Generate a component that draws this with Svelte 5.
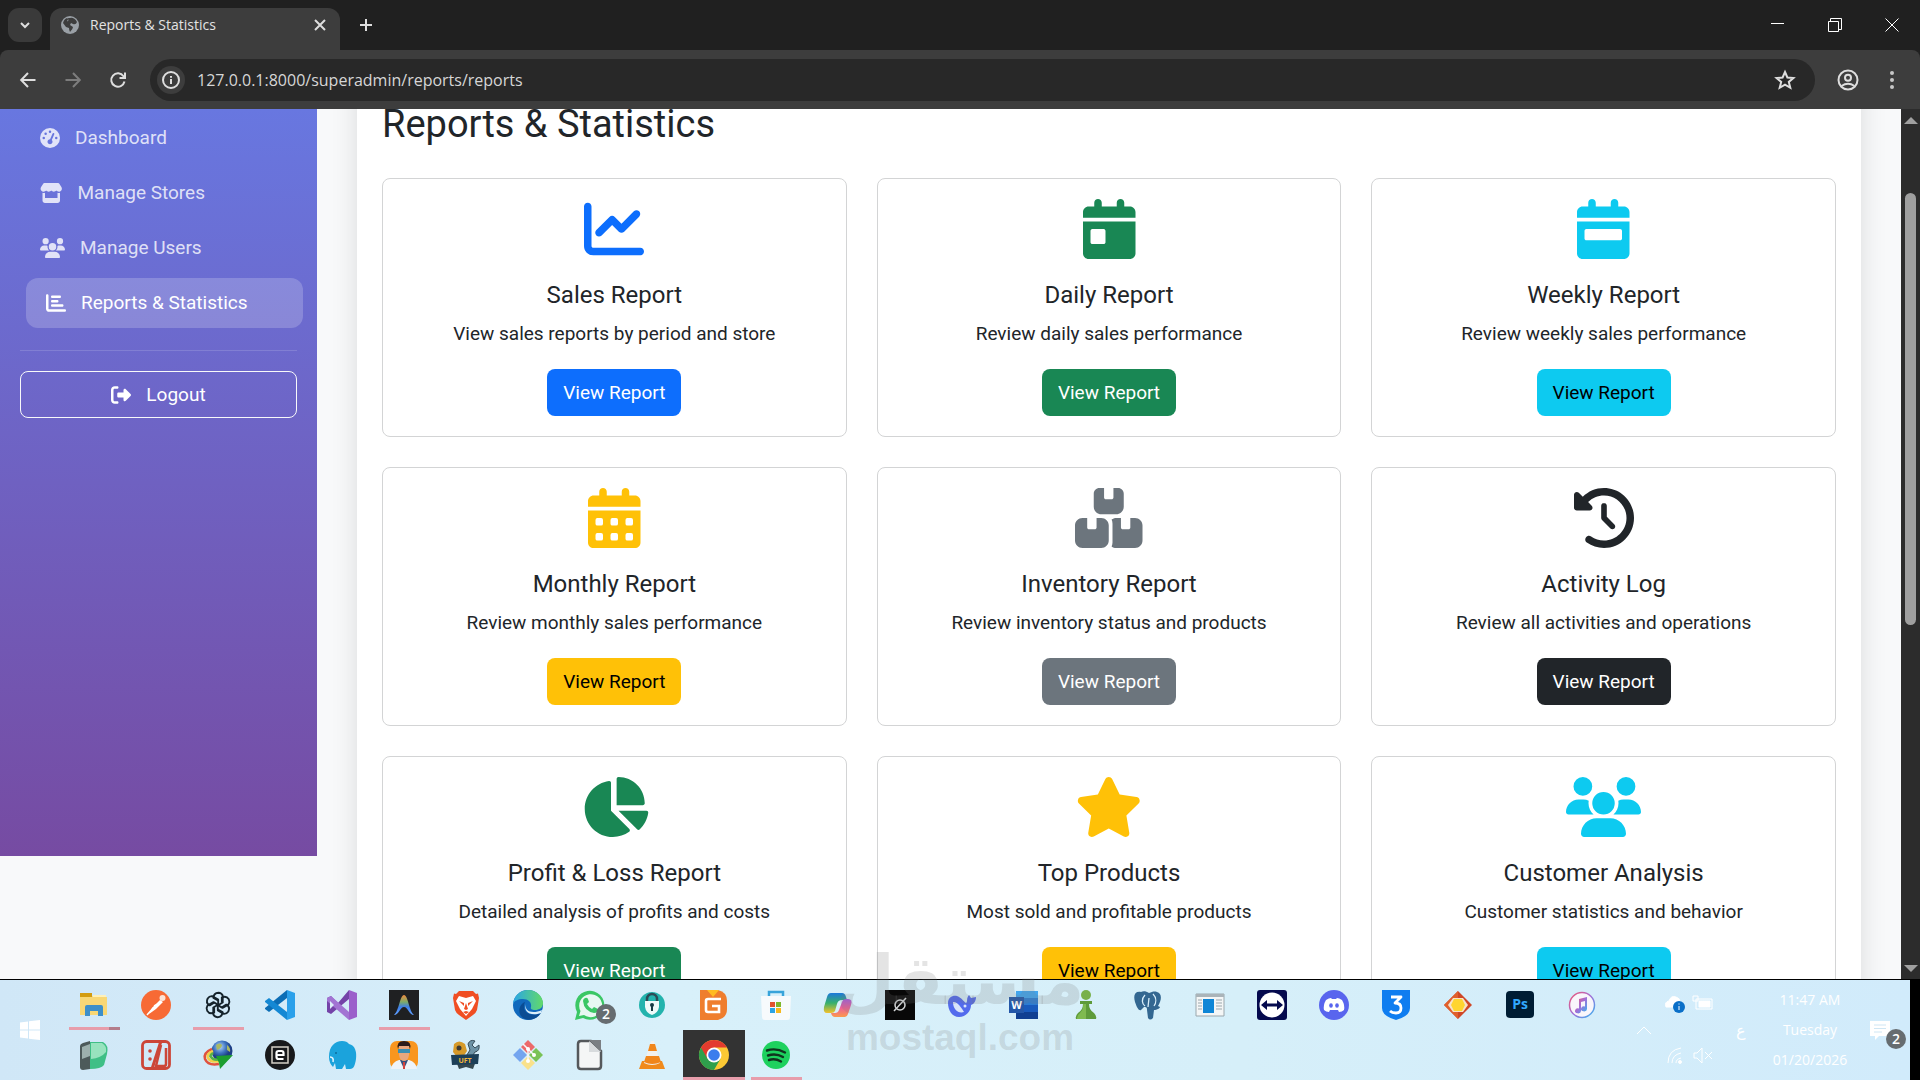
<script>
  const cal = 'M128 0c17.7 0 32 14.3 32 32V64H288V32c0-17.7 14.3-32 32-32s32 14.3 32 32V64h48c26.5 0 48 21.5 48 48v48H0V112C0 85.5 21.5 64 48 64H96V32c0-17.7 14.3-32 32-32zM0 192H448V464c0 26.5-21.5 48-48 48H48c-26.5 0-48-21.5-48-48V192z';
  const dot = (x, y) => `M${x + 16} ${y}h32a16 16 0 0 1 16 16v32a16 16 0 0 1-16 16h-32a16 16 0 0 1-16-16v-32a16 16 0 0 1 16-16z`;

  // w is the glyph width on a 512 high box
  const icons = {
    gauge: { w: 512, d: 'M0 256a256 256 0 1 1 512 0A256 256 0 1 1 0 256zM288 96a32 32 0 1 0 -64 0 32 32 0 1 0 64 0zM256 416c35.3 0 64-28.7 64-64c0-17.4-6.9-33.1-18.1-44.6L366 161.7c5.3-12.1-.2-26.3-12.3-31.6s-26.3 .2-31.6 12.3L257.9 288c-.6 0-1.3 0-1.9 0c-35.3 0-64 28.7-64 64s28.7 64 64 64zM176 144a32 32 0 1 0 -64 0 32 32 0 1 0 64 0zM96 288a32 32 0 1 0 0-64 32 32 0 1 0 0 64zm352-32a32 32 0 1 0 -64 0 32 32 0 1 0 64 0z' },
    store: { w: 576, d: 'M547.6 103.8L490.3 13.1C485.2 5 476.1 0 466.4 0H109.6C99.9 0 90.8 5 85.7 13.1L28.3 103.8c-29.6 46.8-3.4 111.9 51.9 119.4c4 .5 8.1 .8 12.1 .8c26.1 0 49.3-11.4 65.2-29c15.9 17.6 39.1 29 65.2 29c26.1 0 49.3-11.4 65.2-29c15.9 17.6 39.1 29 65.2 29c26.2 0 49.3-11.4 65.2-29c16 17.6 39.1 29 65.2 29c4.1 0 8.1-.3 12.1-.8c55.5-7.4 81.8-72.5 52.1-119.4zM499.7 254.9l-.1 0c-5.3 .7-10.7 1.1-16.2 1.1c-12.4 0-24.3-1.9-35.4-5.3V384H128V250.6c-11.2 3.5-23.2 5.4-35.6 5.4c-5.5 0-11-.4-16.3-1.1l-.1 0c-4.1-.6-8.1-1.3-12-2.3V384v64c0 35.3 28.7 64 64 64H448c35.3 0 64-28.7 64-64V384 252.6c-4 1-8 1.8-12.3 2.3z' },
    users: { w: 640, d: 'M144 0a80 80 0 1 1 0 160A80 80 0 1 1 144 0zM512 0a80 80 0 1 1 0 160A80 80 0 1 1 512 0zM0 298.7C0 239.8 47.8 192 106.7 192h42.7c15.9 0 31 3.5 44.6 9.7c-1.3 7.2-1.9 14.7-1.9 22.3c0 38.2 16.8 72.5 43.3 96c-.2 0-.4 0-.7 0H21.3C9.6 320 0 310.4 0 298.7zM405.3 320c-.2 0-.4 0-.7 0c26.6-23.5 43.3-57.8 43.3-96c0-7.6-.7-15-1.9-22.3c13.6-6.3 28.7-9.7 44.6-9.7h42.7C592.2 192 640 239.8 640 298.7c0 11.8-9.6 21.3-21.3 21.3H405.3zM224 224a96 96 0 1 1 192 0 96 96 0 1 1 -192 0zM128 485.3C128 411.7 187.7 352 261.3 352H378.7C452.3 352 512 411.7 512 485.3c0 14.7-11.9 26.7-26.7 26.7H154.7c-14.7 0-26.7-11.9-26.7-26.7z' },
    bars: { w: 512, d: 'M32 32c17.7 0 32 14.3 32 32V400c0 8.800 7.200 16 16 16H480c17.7 0 32 14.3 32 32s-14.3 32-32 32H80c-44.2 0-80-35.8-80-80V64C0 46.3 14.3 32 32 32zM128 96c0-17.7 14.3-32 32-32l192 0c17.7 0 32 14.3 32 32s-14.3 32-32 32l-192 0c-17.7 0-32-14.3-32-32zm32 80H288c17.7 0 32 14.3 32 32s-14.3 32-32 32H160c-17.7 0-32-14.3-32-32s14.3-32 32-32zm0 112H416c17.7 0 32 14.3 32 32s-14.3 32-32 32H160c-17.7 0-32-14.3-32-32s14.3-32 32-32z' },
    logout: { w: 512, d: 'M377.9 105.9L500.7 228.7c7.2 7.2 11.3 17.1 11.3 27.3s-4.1 20.1-11.3 27.3L377.9 406.1c-6.4 6.4-15 9.9-24 9.9c-18.7 0-33.9-15.2-33.9-33.9l0-62.1-128 0c-17.7 0-32-14.3-32-32l0-64c0-17.7 14.3-32 32-32l128 0 0-62.1c0-18.7 15.2-33.9 33.9-33.9c9 0 17.6 3.6 24 9.9zM160 96L96 96c-17.7 0-32 14.3-32 32l0 256c0 17.7 14.3 32 32 32l64 0c17.7 0 32 14.3 32 32s-14.3 32-32 32l-64 0c-53 0-96-43-96-96L0 128C0 75 43 32 96 32l64 0c17.7 0 32 14.3 32 32s-14.3 32-32 32z' },
    line: { w: 512, d: 'M64 64c0-17.7-14.3-32-32-32S0 46.3 0 64V400c0 44.2 35.8 80 80 80H480c17.7 0 32-14.3 32-32s-14.3-32-32-32H80c-8.8 0-16-7.2-16-16V64zm406.6 86.6c12.5-12.5 12.5-32.8 0-45.3s-32.8-12.5-45.3 0L320 210.7l-57.4-57.4c-12.5-12.5-32.8-12.5-45.3 0l-112 112c-12.5 12.5-12.5 32.8 0 45.3s32.8 12.5 45.3 0L240 221.3l57.4 57.4c12.5 12.5 32.8 12.5 45.3 0l128-128z' },
    day: { w: 448, d: cal + 'm80 64c-8.8 0-16 7.2-16 16v96c0 8.8 7.2 16 16 16h96c8.8 0 16-7.2 16-16V272c0-8.8-7.2-16-16-16H80z' },
    week: { w: 448, d: cal + 'm80 64c-8.8 0-16 7.2-16 16v64c0 8.8 7.2 16 16 16H368c8.8 0 16-7.2 16-16V272c0-8.8-7.2-16-16-16H80z' },
    month: { w: 448, d: cal + [64, 192, 320].map((x) => dot(x, 256) + dot(x, 384)).join('') },
    boxes: { w: 576, d: 'M248 0H208c-26.5 0-48 21.5-48 48V160c0 35.3 28.7 64 64 64H352c35.3 0 64-28.7 64-64V48c0-26.5-21.5-48-48-48H328V80c0 8.8-7.2 16-16 16H264c-8.8 0-16-7.2-16-16V0zM64 256c-35.3 0-64 28.7-64 64V448c0 35.3 28.7 64 64 64H224c35.3 0 64-28.7 64-64V320c0-35.3-28.7-64-64-64H184v80c0 8.8-7.2 16-16 16H120c-8.8 0-16-7.2-16-16V256H64zM352 512H512c35.3 0 64-28.7 64-64V320c0-35.3-28.7-64-64-64H472v80c0 8.8-7.2 16-16 16H408c-8.8 0-16-7.2-16-16V256H352c-15 0-28.8 5.1-39.7 13.8c4.9 10.4 7.7 22 7.7 34.2V464c0 12.2-2.8 23.8-7.7 34.2C323.2 506.9 337 512 352 512z' },
    history: { w: 512, d: 'M75 75L41 41C25.9 25.9 0 36.6 0 57.9V168c0 13.3 10.7 24 24 24H134.1c21.4 0 32.1-25.9 17-41l-30.8-30.8C155 85.5 203 64 256 64c106 0 192 86 192 192s-86 192-192 192c-40.8 0-78.6-12.7-109.7-34.4c-14.5-10.1-34.4-6.6-44.6 7.9s-6.6 34.4 7.9 44.6C151.2 495 201.7 512 256 512c141.4 0 256-114.6 256-256S397.4 0 256 0C185.3 0 121.3 28.7 75 75zm181 53c-13.3 0-24 10.7-24 24V256c0 6.4 2.5 12.5 7 17l72 72c9.4 9.4 24.6 9.4 33.9 0s9.4-24.6 0-33.9l-65-65V152c0-13.3-10.7-24-24-24z' },
    pie: { w: 576, d: 'M304 240V16.6c0-9 7-16.6 16-16.6C443.7 0 544 100.3 544 224c0 9-7.6 16-16.6 16H304zM32 272C32 150.7 122.1 50.3 239 34.3c9.2-1.3 17 6.1 17 15.4V288L412.5 444.5c6.7 6.7 6.2 17.7-1.5 23.1C371.8 495.6 323.8 512 272 512C139.5 512 32 404.6 32 272zm526.4 16c9.3 0 16.6 7.8 15.4 17c-7.7 55.9-34.6 105.6-73.9 142.3c-6 5.6-15.4 5.2-21.2-.7L320 288H558.4z' },
    star: { w: 576, d: 'M316.9 18C311.6 7 300.4 0 288.1 0s-23.4 7-28.8 18L195 150.3 51.4 171.5c-12 1.8-22 10.2-25.7 21.7s-.7 24.2 7.9 32.7L137.8 329 113.2 474.7c-2 12 3 24.2 12.9 31.3s23 8 33.8 2.3l128.3-68.5 128.3 68.5c10.8 5.7 23.9 4.9 33.8-2.3s14.9-19.3 12.9-31.3L438.5 329 542.7 225.9c8.6-8.5 11.7-21.2 7.9-32.7s-13.7-19.9-25.7-21.7L381.2 150.3 316.9 18z' },
  };

  const nav = [
    { label: 'Dashboard', icon: 'gauge' },
    { label: 'Manage Stores', icon: 'store' },
    { label: 'Manage Users', icon: 'users' },
    { label: 'Reports & Statistics', icon: 'bars', active: true },
  ];

  const reports = [
    { title: 'Sales Report', text: 'View sales reports by period and store', icon: 'line', tone: 'primary' },
    { title: 'Daily Report', text: 'Review daily sales performance', icon: 'day', tone: 'success' },
    { title: 'Weekly Report', text: 'Review weekly sales performance', icon: 'week', tone: 'info' },
    { title: 'Monthly Report', text: 'Review monthly sales performance', icon: 'month', tone: 'warning' },
    { title: 'Inventory Report', text: 'Review inventory status and products', icon: 'boxes', tone: 'secondary' },
    { title: 'Activity Log', text: 'Review all activities and operations', icon: 'history', tone: 'dark' },
    { title: 'Profit & Loss Report', text: 'Detailed analysis of profits and costs', icon: 'pie', tone: 'success' },
    { title: 'Top Products', text: 'Most sold and profitable products', icon: 'star', tone: 'warning' },
    { title: 'Customer Analysis', text: 'Customer statistics and behavior', icon: 'users', tone: 'info' },
  ];

  const petals = (shape) => [0, 60, 120, 180, 240, 300].map((a) => `<g transform="rotate(${a} 15 15)">${shape}</g>`).join('');

  // taskbar artwork, each on a 30x30 box
  const row1 = [
    { name: 'File Explorer', open: true, stacked: true, art: '<path d="M1 4h11l2 3h14v18H1z" fill="#f8d775"/><path d="M1 3h12v4H1z" fill="#d39c10"/><path d="M14 5h13v2H14z" fill="#fff0b8"/><path d="M6 26V17q0-2 2-2h14q2 0 2 2v9h-5v-5h-8v5z" fill="#3d8fc9"/>' },
    { name: 'Postman', art: '<circle cx="15" cy="15" r="15" fill="#f76a35"/><circle cx="21.500" cy="8" r="3" fill="#fde3d6"/><path d="M19 10l3 2-7 7-7 5 3-6z" fill="#fff"/><path d="M6 25l7-8M13 16l4-2" stroke="#fff" stroke-width="1.500"/>' },
    { name: 'ChatGPT', open: true, art: '<g fill="none" stroke="#15232b" stroke-width="1.900" stroke-linejoin="round">' + petals('<path d="M15 10.500L10.500 8q0-5 5-5.200 3 .2 4.200 2.700V12.500L15 15.200"/>') + '</g>' },
    { name: 'Visual Studio Code', art: '<path d="M22 0l8 3v24l-8 3z" fill="#2aa0ea"/><path d="M22 0v8L4 22l-4-3v-1z" fill="#0b6db5"/><path d="M22 30v-8L4 8l-4 3v1z" fill="#1488d4"/>' },
    { name: 'Visual Studio', art: '<path d="M22 0l8 3v24l-8 3z" fill="#9b5fcb"/><path d="M0 8l4-2 7 7L22 0v9L4 24l-4-2z" fill="#7443a8"/><path d="M4 6l18 16v8L0 11V8z" fill="#a274d3"/><path d="M3 11l4 4-4 4z" fill="#dceefa"/>' },
    { name: 'Antigravity', open: true, art: '<defs><linearGradient id="ag" x1="0" x2="0" y1="0" y2="1"><stop offset="0" stop-color="#f08a3c"/><stop offset=".35" stop-color="#7dab68"/><stop offset=".6" stop-color="#3d7fe8"/><stop offset="1" stop-color="#62a0ff"/></linearGradient></defs><path d="M0 0h30v30H0z" fill="#1f2022"/><path d="M5 25C10 21 11 5 15 5s5 16 10 20c-5 0-6-8-10-8s-5 8-10 8z" fill="url(#ag)"/>' },
    { name: 'Brave', art: '<path d="M8 1h14l3 3 2-.500L28 8l-2 12q-1 3-4 5l-7 5-7-5q-3-2-4-5L2 8l1-4.500 2 .500z" fill="#f04e23"/><path d="M8 6l7 2 7-2 3 5-4 8-6 7-6-7-4-8z" fill="#fff"/><path d="M8 11l5 2v3zM22 11l-5 2v3zM15 13l-2 6 2 1 2-1zM12 22l3-1 3 1-3 2z" fill="#f04e23"/>' },
    { name: 'Edge', art: '<defs><linearGradient id="ed" x1="0" x2="1"><stop offset="0" stop-color="#2aa5e6"/><stop offset="1" stop-color="#62da69"/></linearGradient></defs><circle cx="15" cy="15" r="15" fill="#1169bd"/><path d="M0 14C1 5 8 0 15 0c9 0 15 7 15 13 0 5-4 7-8 7-3 0-5-1-4-3 1-5-3-8-8-8S1 11 0 14z" fill="url(#ed)"/><path d="M12 12c-4 8 3 16 16 11-4 6-11 8-16 6C3 25 6 14 12 12z" fill="#0a4c93"/><path d="M13 14c-2 6 5 11 16 6l-1 3c-11 4-18-2-15-9z" fill="#dceffa"/>' },
    { name: 'WhatsApp', badge: '2', art: '<path d="M0 30l2-8A14.500 14.500 0 1 1 8 28z" fill="#3bc765"/><path d="M4 26l1.500-5A11.500 11.500 0 1 1 9 25z" fill="#e8f8f2"/><path d="M10 8q2-1 3 1l1 3-2 2q2 4 5 5l2-2 4 2q0 4-4 4Q9 21 8 11q0-2 2-3z" fill="#3bc765"/>' },
    { name: 'Password Manager', art: '<circle cx="15" cy="15" r="13" fill="#23b3ad"/><path d="M10 12V9a5 5 0 0 1 10 0v3" fill="none" stroke="#2c4b56" stroke-width="2.500"/><path d="M8 11h14v6q-1 6-7 8-6-2-7-8z" fill="#eefaf9"/><circle cx="15" cy="15" r="2" fill="#173a44"/><path d="M14 15h2v6h-2z" fill="#173a44"/>' },
    { name: 'GameLoop', art: '<path d="M1 0h18q9 2 9 11v8q0 9-9 11H1z" fill="#ef7e2e"/><path d="M8 0h12l-6 7z" fill="#ffbb22"/><path d="M22 9H9q-2 0-2 2v9q0 2 2 2h11v-6h-7" fill="none" stroke="#fff" stroke-width="2.600"/>' },
    { name: 'Microsoft Store', art: '<path d="M8 7V2h14v5" fill="none" stroke="#37a3da" stroke-width="2.500"/><path d="M0 6h30l-1 21q0 3-3 3H4q-3 0-3-3z" fill="#f7fafc"/><path d="M9 12h5v5H9z" fill="#e0532f"/><path d="M15 12h5v5h-5z" fill="#7eb72b"/><path d="M9 18h5v5H9z" fill="#29a4e6"/><path d="M15 18h5v5h-5z" fill="#f6b81e"/>' },
    { name: 'Copilot', art: '<defs><linearGradient id="cp" x1="0" x2="0" y1="0" y2="1"><stop offset="0" stop-color="#1c78dc"/><stop offset=".5" stop-color="#37b06c"/><stop offset="1" stop-color="#f5c22a"/></linearGradient><linearGradient id="cq" x1="0" x2="0" y1="0" y2="1"><stop offset="0" stop-color="#a85be0"/><stop offset=".5" stop-color="#ee6197"/><stop offset="1" stop-color="#fb9a4b"/></linearGradient></defs><path d="M8 3h11q3 0 4 4l1 3h-5q-4 0-5 4l-2 7q-1 2-4 2H4q-4 0-3-6l3-10q1-4 4-4z" fill="url(#cp)"/><path d="M22 27H12q-3 0-4-4h4q3 0 4-3l3-8q1-3 4-3h2q5 0 3 6l-3 9q-1 3-3 3z" fill="url(#cq)"/>' },
    { name: 'Grok', art: '<path d="M0 0h30v30H0z" fill="#080808"/><circle cx="15" cy="15" r="5" fill="none" stroke="#d2d5d6" stroke-width="1.500"/><path d="M9 21L21 8" stroke="#d2d5d6" stroke-width="1.500"/>' },
    { name: 'DeepSeek', art: '<path d="M1 13c0-6 5-8 9-7 5 2 6 5 9 7 2-1 0-5 3-8l2 3 5-1c0 4-2 7-5 8 0 6-5 12-12 12S1 20 1 13z" fill="#536bed"/><path d="M6 12c4-1 8 5 11 10-6 2-11-3-11-10z" fill="#d9e4fa"/><circle cx="18" cy="16" r="1.500" fill="#d9e4fa"/>' },
    { name: 'Word', art: '<path d="M7 1h22v9H7z" fill="#41a5ee"/><path d="M7 8h22v7H7z" fill="#2b7cd3"/><path d="M7 15h22v7H7z" fill="#185abd"/><path d="M7 22h22v7H7z" fill="#103f91"/><path d="M0 7h15v16H0z" fill="#2457a8"/><text x="7.500" y="19" font-size="11" font-weight="700" text-anchor="middle" fill="#fff" font-family="Open Sans, sans-serif">W</text>' },
    { name: 'Chess', art: '<circle cx="15" cy="5" r="5" fill="#78b04a"/><path d="M9 11h12v3h-3q0 6 5 9 3 3 2 6H5q-1-3 2-6 5-3 5-9H9z" fill="#5e9b3a"/><path d="M12 14h3v15H6q0-4 3-6 4-4 3-9z" fill="#7fba4f"/>' },
    { name: 'PostgreSQL', art: '<path d="M8 2C2 1 0 5 2 12c2 6 4 9 6 8l3-3c2 0 3 0 3 3l1 8q2 3 5 0l1-8c3 0 6-2 6-3l-2-1c4-6 4-13-1-14-3-1-5 0-8 1-3-2-6-2-8-1z" fill="#336791"/><path d="M12 5C8 9 9 14 12 16M20 4c4 4 3 9 1 12M16 8l-1 9" fill="none" stroke="#d9eefa" stroke-width="1.300"/>' },
    { name: 'Window', art: '<path d="M1 4h28v22H1z" fill="#f4f6f6" stroke="#9aa7ad"/><path d="M1 4h28v3H1z" fill="#aab4b9"/><path d="M8 9h11v14H8z" fill="#0f86d6"/><path d="M3 10h4M3 13h4M3 16h4M3 19h4M21 10h6M21 13h6M21 16h6M21 19h6" stroke="#9aa7ad"/>' },
    { name: 'TeamViewer', art: '<rect width="30" height="30" rx="3" fill="#050a4e"/><circle cx="15" cy="15" r="12.500" fill="#fff"/><path d="M4 15l6-5v3.500h10V10l6 5-6 5v-3.500H10V20z" fill="#050a4e"/>' },
    { name: 'Discord', art: '<circle cx="15" cy="15" r="15" fill="#5965ee"/><path d="M7 10q3-2 5-2l1 1h4l1-1q2 0 5 2 3 5 2 10-2 2-5 2l-1-2h-8l-1 2q-3 0-5-2-1-5 2-10z" fill="#fff"/><ellipse cx="12" cy="15.500" rx="1.800" ry="2.200" fill="#5965ee"/><ellipse cx="18" cy="15.500" rx="1.800" ry="2.200" fill="#5965ee"/>' },
    { name: '3D Viewer', art: '<path d="M1 0h28v18q0 8-14 12Q1 26 1 18z" fill="#0f7df0"/><path d="M10 7h10l-6 6q6 0 6 5t-5 5q-4 0-6-2" fill="none" stroke="#fff" stroke-width="2.800" stroke-linejoin="round"/>' },
    { name: 'Diamond', art: '<path d="M15 1l14 14-14 14L1 15z" fill="#cf4726"/><path d="M15 1v28L1 15z" fill="#e0602c"/><path d="M10 8h10l5 7-5 7H10l-5-7z" fill="#f7e2c8"/><path d="M11 9h8l3 6-3 6h-8l-3-6z" fill="#ffd52f"/>' },
    { name: 'Photoshop', art: '<rect x="1" y="1" width="28" height="27" rx="4" fill="#001d34"/><text x="15" y="19" font-size="14" font-weight="700" text-anchor="middle" fill="#31a8ff" font-family="Open Sans, sans-serif">Ps</text>' },
    { name: 'iTunes', art: '<defs><linearGradient id="it" x1="0" x2="1" y1="0" y2="1"><stop offset="0" stop-color="#f4556f"/><stop offset=".5" stop-color="#a06fd8"/><stop offset="1" stop-color="#36b6f0"/></linearGradient></defs><circle cx="15" cy="15" r="12.500" fill="#f9f6fb" stroke="url(#it)" stroke-width="1.500"/><path d="M12 9l8-2v12a3 2.500 0 1 1-2-2.500V11l-4 1v9a3 2.500 0 1 1-2-2.500z" fill="url(#it)"/>' },
  ];

  const row2 = [
    { name: 'Emulator', art: '<path d="M1 6q0-2 3-3l7-2v28l-7 1q-3 0-3-3z" fill="#4d5a5a"/><path d="M3 7l8-3v12l-8 3z" fill="#9db0ad"/><path d="M11 2l13 0q6 3 4 12l-3 11q-3 4-14 4z" fill="#3fbf86"/><path d="M12 3l11 0q5 3 4 9-5 6-15 7z" fill="#97e3be"/>' },
    { name: 'Download Manager', art: '<rect x="1.500" y="1.500" width="27" height="27" rx="4" fill="none" stroke="#cc4638" stroke-width="2.800"/><path d="M20 1l-9 28" stroke="#cc4638" stroke-width="3"/><path d="M20 5L15 26h8q2 0 2-2V8" fill="none" stroke="#cc4638" stroke-width="2.500"/><circle cx="9" cy="11" r="1.800" fill="#cc4638"/><circle cx="9" cy="19" r="1.800" fill="#cc4638"/>' },
    { name: 'Internet Download Manager', art: '<defs><radialGradient id="gl" cx=".4" cy=".3"><stop offset="0" stop-color="#b8d8f8"/><stop offset=".6" stop-color="#3e74c0"/><stop offset="1" stop-color="#1d3f86"/></radialGradient></defs><circle cx="19" cy="11" r="10.500" fill="url(#gl)"/><path d="M13 5q4-3 6 0 0 3-5 5zM24 5q4 3 3 7l-3-2z" fill="#a9b964"/><path d="M9 9Q0 13 2 19q3 7 14 5" fill="none" stroke="#e0523e" stroke-width="2.500"/><path d="M10 11q-7 3-5 7 3 5 12 3" fill="none" stroke="#f2d148" stroke-width="2.500"/><path d="M10 13q-4 3-2 4 3 4 9 2" fill="none" stroke="#58b347" stroke-width="2.500"/><path d="M13 16l17-1-13 14-1-6z" fill="#1c9e30"/>' },
    { name: 'Epic', art: '<circle cx="15" cy="15" r="15" fill="#18191b"/><path d="M7 7h16v16H7z" fill="none" stroke="#d4cfc6" stroke-width="1.500"/><path d="M18.500 19h-5q-2 0-2-2v-4q0-2 2-2h3q2 0 2 2v2h-6" fill="none" stroke="#fff" stroke-width="2.200"/>' },
    { name: 'Herd', art: '<path d="M2 17C2 6 8 1 15 1q5 0 7 3c6 1 8 8 7 15-1 6-2 10-6 10h-4l-1-5-3 5H9l-1-6-2 4q-4-4-4-10z" fill="#1ba3dc"/><path d="M3 17q4 0 3 5" stroke="#e8f7ff" stroke-width="1.500" fill="none"/><circle cx="9" cy="13" r="1" fill="#0d6e9c"/>' },
    { name: 'Doctor', art: '<rect x="1" y="1" width="28" height="28" rx="7" fill="#f9961e"/><path d="M2 29q1-7 8-9h10q7 2 8 9z" fill="#eef3f8"/><path d="M11 20h8l-4 9z" fill="#34507f"/><path d="M14 22h2v7h-2z" fill="#d2433f"/><path d="M10 6h10v9q-1 6-5 6t-5-6z" fill="#e8a77e"/><path d="M9 9Q7 1 15 1t6 8l-1-3H10z" fill="#2b1c1a"/><path d="M9 9h12v4H9z" fill="#3a8fb3"/>' },
    { name: 'UFT Tool', art: '<path d="M3 4q5-5 11 0l2 7-4 6H6l-4-5z" fill="#d69a2a"/><circle cx="8" cy="8" r="2.500" fill="#3c3a34"/><path d="M17 4q2-5 7-3l-3 4 3 3 4-3q1 6-4 7l-6 9-4-3 5-8z" fill="#6e93a6" stroke="#364b57"/><path d="M5 21h20l-3 8-7-2-7 2z" fill="#35474f"/><path d="M0 15l28-1-1 10-26 1z" fill="#1c3f58"/><text x="14" y="23" font-size="7" font-weight="700" text-anchor="middle" fill="#f2b53a" font-family="Open Sans, sans-serif">UFT</text>' },
    { name: 'Git', art: '<path d="M15 0l7 7-7 7-7-7z" fill="#ec6a6a"/><path d="M7 8l7 7-7 7-7-7z" fill="#74a5ef"/><path d="M23 8l7 7-7 7-7-7z" fill="#79c257"/><path d="M15 16l7 7-7 7-7-7z" fill="#f9e18b"/><path d="M10 4l11 11M15 8v13" stroke="#f7f9fa" stroke-width="1.500"/><circle cx="15" cy="9" r="2" fill="#fff"/><circle cx="21" cy="15" r="2" fill="#fff"/><circle cx="15" cy="21" r="2" fill="#fff"/>' },
    { name: 'LibreOffice', art: '<path d="M6 1h10l10 10v15q0 3-3 3H6q-3 0-3-3V4q0-3 3-3z" fill="#f5f6f6" stroke="#55585b" stroke-width="2.500"/><path d="M14 0h12v12z" fill="#7b7f83"/><path d="M14 1v11h12z" fill="#d8dbdd"/>' },
    { name: 'VLC', art: '<path d="M5 21h20l3 8H2z" fill="#f08a1c"/><path d="M14 1h3l6 22q-8 4-16 0z" fill="#f2f0ec"/><path d="M13 4h5l2 7h-9z" fill="#f0861b"/><path d="M9 16h13l2 6q-9 4-17 0z" fill="#f0861b"/>' },
    { name: 'Chrome', current: true, open: true, art: '<circle cx="15" cy="15" r="15" fill="#fcc934"/><path d="M2 7.500A15 15 0 0 0 15 30l6.500-11.300L15 15z" fill="#2fa04c"/><path d="M15 7.500H28A15 15 0 0 0 2 7.500l6.500 11.200z" fill="#e33b2e"/><circle cx="15" cy="15" r="7.500" fill="#fff"/><circle cx="15" cy="15" r="5.800" fill="#3b7ded"/>' },
    { name: 'Spotify', open: true, art: '<circle cx="15" cy="15" r="14" fill="#1ed15e"/><path d="M6 10.500q9-3 18 2M7 15.500q8-2.500 15 1.500M8 20q6-2 12 1.500" fill="none" stroke="#10341e" stroke-width="2.400" stroke-linecap="round"/>' },
  ];
</script>

{#snippet glyph(name, size)}
  <svg class="glyph" viewBox="0 0 {icons[name].w} 512" height={size} width={(icons[name].w * size) / 512} aria-hidden="true">
    <path d={icons[name].d} fill="currentColor" fill-rule="evenodd" />
  </svg>
{/snippet}

{#snippet task(app)}
  <button class="task" class:open={app.open} class:stacked={app.stacked} class:current={app.current} aria-label={app.name}>
    <svg viewBox="0 0 30 30" width="30" height="30">{@html app.art}</svg>
    {#if app.badge}<span class="badge">{app.badge}</span>{/if}
  </button>
{/snippet}

<div class="screen">
  <header class="tabs">
    <button class="tab-search" aria-label="Search tabs">
      <svg width="12" height="8" viewBox="0 0 12 8"><path d="M2 2l4 4 4-4" /></svg>
    </button>
    <div class="tab">
      <svg width="18" height="18" viewBox="0 0 18 18">
        <circle cx="9" cy="9" r="9" fill="#9aa0a6" />
        <path d="M9 2q4-1 7 4-1 3-4 2l-2-1-1 2 3 2q0 2-3 5-1-2-1-4l-3-1-3-4q1-4 4-5 2 1 0 3 2 1 1-3z" fill="#3d3d3d" />
      </svg>
      <span class="tab-title">Reports &amp; Statistics</span>
      <button aria-label="Close tab">
        <svg width="12" height="12" viewBox="0 0 12 12"><path d="M1 1l10 10M11 1L1 11" /></svg>
      </button>
    </div>
    <button class="new-tab" aria-label="New tab">
      <svg width="14" height="14" viewBox="0 0 14 14"><path d="M7 1v12M1 7h12" /></svg>
    </button>
    <div class="window-controls">
      <button aria-label="Minimize"><svg width="14" height="14" viewBox="0 0 14 14"><path d="M0 5.500h13" /></svg></button>
      <button aria-label="Restore"><svg width="14" height="14" viewBox="0 0 14 14"><path d="M.5 3.500h10v10H.5zM2.500 3V.5h11v11H11" /></svg></button>
      <button aria-label="Close"><svg width="14" height="14" viewBox="0 0 14 14"><path d="M.5 .5l13 13M13.500 .5l-13 13" /></svg></button>
    </div>
  </header>

  <div class="toolbar">
    <button aria-label="Back"><svg width="16" height="16" viewBox="0 0 16 16"><path d="M15.500 8H1.500M8 1L1.200 8 8 15" /></svg></button>
    <button class="off" aria-label="Forward"><svg width="16" height="16" viewBox="0 0 16 16"><path d="M.5 8h14M8 1l6.800 7L8 15" /></svg></button>
    <button aria-label="Reload"><svg width="16" height="16" viewBox="0 0 16 16"><path d="M14.500 9.500A6.700 6.700 0 1 1 13.500 4.200L15 6M15 .5V6H9.500" /></svg></button>
    <div class="address">
      <span class="site-info">
        <svg width="18" height="18" viewBox="0 0 18 18"><circle cx="9" cy="9" r="8" /><path d="M9 8v5M9 5v1.800" /></svg>
      </span>
      <input type="text" aria-label="Address" value="127.0.0.1:8000/superadmin/reports/reports" />
      <svg width="20" height="20" viewBox="0 0 20 20"><path d="M10 2l2.400 5.500 6 .5-4.600 3.900 1.500 5.900L10 14.700l-5.300 3.100 1.500-5.900L1.600 8l6-.5z" /></svg>
    </div>
    <button aria-label="Profile">
      <svg width="22" height="22" viewBox="0 0 22 22"><circle cx="11" cy="11" r="9.500" /><circle cx="11" cy="8.800" r="3" /><path d="M4.500 17q6.500-4.500 13 0" /></svg>
    </button>
    <button class="menu" aria-label="Menu">
      <svg width="4" height="18" viewBox="0 0 4 18"><circle cx="2" cy="2" r="2" /><circle cx="2" cy="9" r="2" /><circle cx="2" cy="16" r="2" /></svg>
    </button>
  </div>

  <div class="page">
    <aside>
      <nav>
        {#each nav as item}
          <a href="#{item.icon}" class:active={item.active}>{@render glyph(item.icon, 20)}{item.label}</a>
        {/each}
      </nav>
      <hr />
      <button class="logout">{@render glyph('logout', 20)}Logout</button>
    </aside>

    <main>
      <div class="panel">
        <h1>Reports &amp; Statistics</h1>
        <div class="cards">
          {#each reports as report}
            <section class="card {report.tone}">
              {@render glyph(report.icon, 60)}
              <h2>{report.title}</h2>
              <p>{report.text}</p>
              <a class="btn" href="#{report.icon}">View Report</a>
            </section>
          {/each}
        </div>
      </div>
    </main>

    <div class="scrollbar">
      <svg width="14" height="7" viewBox="0 0 14 7"><path d="M7 0l7 7H0z" /></svg>
      <div class="track"><div class="thumb"></div></div>
      <svg width="14" height="7" viewBox="0 0 14 7"><path d="M0 0h14L7 7z" /></svg>
    </div>
  </div>

  <footer>
    <button class="start" aria-label="Start">
      <svg width="20" height="20" viewBox="0 0 20 20"><path d="M0 2.500L8 1.400V9.500H0zM9 1.200L20 0v9.500H9zM0 10.500h8v8.100L0 17.500zM9 10.500h11V20L9 18.800z" fill="#fff" /></svg>
    </button>
    <div class="apps">
      <div class="row">{#each row1 as app}{@render task(app)}{/each}</div>
      <div class="row">{#each row2 as app}{@render task(app)}{/each}</div>
    </div>
    <div class="tray">
      <svg width="16" height="10" viewBox="0 0 16 10"><path d="M1 9l7-7 7 7" /></svg>
      <div class="status">
        <svg width="22" height="22" viewBox="0 0 22 22"><path d="M2 14q-2-5 3-6 2-6 7-4 4 1 4 5 4 1 3 5z" class="solid" /><circle cx="15" cy="14" r="6" fill="#0a6fc8" stroke="none" /><path d="M15 13v4M15 10.500v1" /></svg>
        <svg width="22" height="22" viewBox="0 0 22 22"><path d="M4 6h16v10H4zM1 3h5v5H1z" /><path d="M7 8h11v6H7z" class="solid" /></svg>
        <svg width="22" height="22" viewBox="0 0 22 22"><path d="M4 18Q4 5 17 3M8 18q0-8 9-10M12 18q0-4 5-5" /><circle cx="16" cy="17" r="1.500" class="solid" /></svg>
        <svg width="22" height="22" viewBox="0 0 22 22"><path d="M2 8h3l5-5v15l-5-5H2zM13 7l7 7M20 7l-7 7" /></svg>
      </div>
      <span class="lang">ع</span>
      <div class="clock"><span>11:47 AM</span><span>Tuesday</span><span>01/20/2026</span></div>
      <button class="task" aria-label="Notifications">
        <svg width="20" height="20" viewBox="0 0 20 20"><path d="M0 1h20v15H9l-4 4v-4H0z" fill="#fff" stroke="none" /><path d="M4 5h12M4 8.500h12M4 12h8" stroke="#cfe6f4" /></svg>
        <span class="badge">2</span>
      </button>
    </div>
  </footer>

  <div class="watermark" aria-hidden="true"><span lang="ar">مستقل</span><span>mostaql.com</span></div>
</div>

<style>
:global(body) {
  margin: 0;
}
.screen, .screen * {
  box-sizing: border-box;
}
.screen {
  position: relative;
  display: flex;
  flex-direction: column;
  height: 100vh;
  overflow: hidden;
  background: #202020;
  font-family: Roboto, sans-serif;
  font-size: 19px;
  line-height: 30px;
  color: #212529;
}
svg {
  display: block;
  flex: none;
  overflow: visible;
}
button {
  display: flex;
  align-items: center;
  justify-content: center;
  padding: 0;
  border: 0;
  background: none;
  color: inherit;
  font: inherit;
}
a {
  color: inherit;
  text-decoration: none;
}

/* browser chrome */
.tabs {
  display: flex;
  flex: none;
  height: 50px;
  padding: 8px 0 0 8px;
  font-family: 'Open Sans', sans-serif;
}
.tabs svg path:not([fill]), .toolbar svg {
  fill: none;
  stroke: #dedede;
  stroke-width: 2;
}
.tab-search {
  width: 34px;
  height: 34px;
  margin-right: 8px;
  border-radius: 11px;
  background: #3a3a3a;
}
.tab {
  display: flex;
  align-items: center;
  gap: 11px;
  width: 290px;
  padding: 0 14px 8px 11px;
  border-radius: 12px 12px 0 0;
  background: #3d3d3d;
  color: #e3e3e3;
  font-size: 14px;
}
.tab-title {
  flex: 1;
  white-space: nowrap;
}
.new-tab {
  height: 34px;
  margin-left: 19px;
}
.window-controls {
  display: flex;
  margin-left: auto;
}
.window-controls button {
  width: 57px;
  height: 34px;
}
.window-controls svg path:not([fill]) {
  stroke: #fff;
  stroke-width: 1;
}
.toolbar {
  display: flex;
  flex: none;
  align-items: center;
  height: 59px;
  padding: 0 20px 0 5px;
  background: #3d3d3d;
  border-radius: 8px 8px 0 0;
}
.toolbar button {
  width: 45px;
  height: 34px;
}
.toolbar .off {
  opacity: 0.4;
}
.toolbar .menu {
  width: 16px;
  margin-left: 14px;
}
.menu svg {
  fill: #c7c7c7;
  stroke: none;
}
.address {
  display: flex;
  flex: 1;
  align-items: center;
  height: 42px;
  margin: 0 10px;
  padding: 0 20px 0 7px;
  border-radius: 21px;
  background: #282828;
}
.site-info {
  display: grid;
  place-items: center;
  width: 28px;
  height: 28px;
  border-radius: 50%;
  background: #3d3d3d;
}
.address input {
  flex: 1;
  min-width: 0;
  padding: 0 12px;
  border: 0;
  outline: 0;
  background: none;
  color: #d6d6d6;
  font: 16px/24px 'Open Sans', sans-serif;
}

/* page */
.page {
  display: flex;
  flex: 1;
  align-items: flex-start;
  min-height: 0;
  overflow: hidden;
  background: #f8f9fa;
}
aside {
  flex: none;
  width: 317px;
  height: calc(100% - 123px);
  padding: 4px 20px 0;
  background: linear-gradient(180deg, #6877e0, #764ba2);
  color: #fff;
}
nav {
  display: grid;
  gap: 5px;
}
nav a {
  display: flex;
  align-items: center;
  gap: 15px;
  height: 50px;
  padding: 0 20px;
  border-radius: 12px;
  color: rgba(255, 255, 255, 0.8);
}
nav a.active {
  transform: translateX(6px);
  background: rgba(255, 255, 255, 0.2);
  color: #fff;
}
hr {
  height: 1px;
  margin: 22px 0 20px;
  border: 0;
  background: rgba(255, 255, 255, 0.15);
}
.logout {
  gap: 15px;
  width: 100%;
  height: 47px;
  border: 1px solid #f8f9fa;
  border-radius: 8px;
}
main {
  flex: 1;
  padding: 0 40px;
}
.panel {
  margin-top: -34px;
  padding: 25px;
  background: #fff;
  box-shadow: 0 0 25px rgba(0, 0, 0, 0.12);
}
h1 {
  margin: 0 0 30px;
  font-size: 38px;
  font-weight: 400;
  line-height: 48px;
}
.cards {
  display: grid;
  grid-template-columns: repeat(3, 1fr);
  gap: 30px;
}
.card {
  display: flex;
  flex-direction: column;
  align-items: center;
  padding: 20px;
  border: 1px solid #d3d4d5;
  border-radius: 8px;
  text-align: center;
}
.card .glyph {
  color: var(--tone);
}
h2 {
  margin: 21px 0 9px;
  font-size: 24px;
  font-weight: 400;
  line-height: 30px;
}
.card p {
  margin: 0 0 20px;
}
.btn {
  padding: 0 16px;
  border-radius: 8px;
  background: var(--tone);
  color: var(--ink, #fff);
  line-height: 47px;
}
.primary { --tone: #0d6efd; }
.success { --tone: #198754; }
.info { --ink: #000; --tone: #0dcaf0; }
.warning { --tone: #ffc107; --ink: #000; }
.secondary { --tone: #6c757d; }
.dark { --tone: #212529; }
.scrollbar {
  display: flex;
  flex: none;
  flex-direction: column;
  align-items: center;
  align-self: stretch;
  width: 19px;
  padding: 8px 0 7px;
  background: #2c2c2c;
}
.scrollbar path {
  fill: #a0a0a0;
}
.track {
  flex: 1;
  width: 11px;
  padding-top: 69px;
}
.thumb {
  height: 56%;
  border-radius: 6px;
  background: #9f9f9f;
}

/* taskbar */
footer {
  display: flex;
  flex: none;
  height: 101px;
  border-top: 1px solid #000;
  border-right: 10px solid #000;
  background: linear-gradient(90deg, #d0e7f7, #d8f0fa 35%, #d6eff9 65%, #d1ebfb);
}
.start {
  width: 60px;
  margin-right: 3px;
}
.row {
  display: flex;
}
.task {
  position: relative;
  width: 62px;
  height: 50px;
}
.open::after {
  content: '';
  position: absolute;
  bottom: 0;
  left: 6px;
  right: 5px;
  height: 3px;
  background: #e79dab;
}
.stacked::after {
  background: linear-gradient(90deg, #e79dab 78%, #b37d8b 78%);
}
.current {
  background: #333;
}
.current::after {
  left: 0;
  right: 0;
}
.badge {
  position: absolute;
  top: 24px;
  left: 37px;
  width: 20px;
  height: 20px;
  border-radius: 50%;
  background: #666c70;
  color: #fff;
  font: 600 14px/20px 'Open Sans', sans-serif;
  text-align: center;
}
.tray {
  display: flex;
  align-items: center;
  margin-left: auto;
  color: #fff;
  font: 14px/30px 'Open Sans', sans-serif;
}
.tray svg {
  fill: none;
  stroke: #fff;
}
.tray .solid {
  fill: #fff;
}
.status {
  display: grid;
  grid-template-columns: 22px 22px;
  gap: 30px 6px;
  margin: 0 18px 0 12px;
}
.lang {
  width: 18px;
  margin-right: 20px;
  font-size: 16px;
  text-align: center;
}
.clock {
  display: grid;
  width: 80px;
  text-align: center;
}
.tray .task {
  width: 60px;
}
.tray .badge {
  left: 36px;
}
.watermark {
  position: absolute;
  bottom: 20px;
  left: 50%;
  display: grid;
  transform: translateX(-50%);
  color: rgba(120, 120, 120, 0.2);
  font: 700 37px/44px 'Liberation Sans', sans-serif;
  text-align: center;
  pointer-events: none;
}
.watermark span:first-child {
  font-family: 'DejaVu Sans', sans-serif;
  font-size: 68px;
  line-height: 70px;
}
</style>
